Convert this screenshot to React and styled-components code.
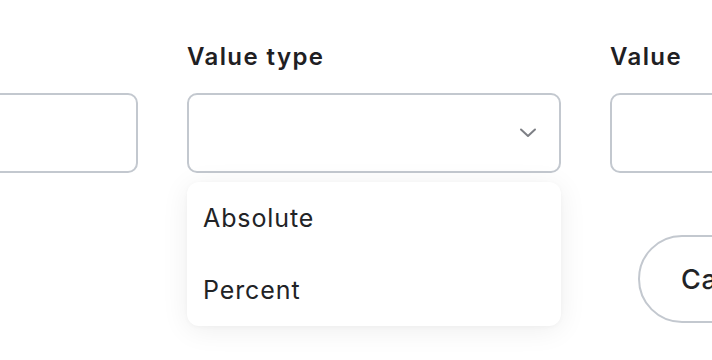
import React from "react";
import styled, { createGlobalStyle } from "styled-components";

const Global = createGlobalStyle`
  html, body { margin: 0; padding: 0; background: #ffffff; }
  body { font-family: Inter, "Noto Sans", sans-serif; color: #222326; overflow: hidden; }
`;

const Page = styled.div`
  width: 712px;
  height: 360px;
  overflow: hidden;
  padding-top: 41px;
  box-sizing: border-box;
`;

const FieldRow = styled.div`
  display: grid;
  grid-template-columns: 374px 374px 374px;
  column-gap: 49px;
  margin-left: -236px;
`;

const Field = styled.div`
  position: relative;
  display: flex;
  flex-direction: column;
`;

const Label = styled.div`
  font-size: 24px;
  line-height: 32px;
  font-weight: 600;
  letter-spacing: 1.4px;
  color: #1f2023;
  height: 32px;
  margin-bottom: 20px;
`;

const InputBox = styled.div`
  height: 80px;
  box-sizing: border-box;
  border: 2px solid #c3c8cf;
  border-radius: 10px;
  background: #fff;
`;

const SelectBox = styled(InputBox)`
  display: flex;
  align-items: center;
  justify-content: flex-end;
  padding-right: 22px;
`;

const Menu = styled.div`
  position: absolute;
  left: 0;
  right: 0;
  top: 141px;
  background: #fff;
  border-radius: 12px;
  box-shadow: 0 4px 28px rgba(0, 0, 0, 0.07), 0 1px 4px rgba(0, 0, 0, 0.03);
  display: flex;
  flex-direction: column;
`;

const Option = styled.div`
  height: 72px;
  display: flex;
  align-items: center;
  padding-left: 16px;
  font-size: 25px;
  letter-spacing: 0.9px;
  color: #222326;
`;

const Footer = styled.div`
  display: flex;
  padding-left: 638px;
  margin-top: 62px;
`;

const Button = styled.div`
  height: 88px;
  box-sizing: border-box;
  border: 2px solid #c3c8cf;
  border-radius: 44px;
  padding: 0 41px;
  display: flex;
  align-items: center;
  font-size: 27px;
  font-weight: 500;
  letter-spacing: 0.6px;
  color: #222326;
  white-space: nowrap;
  flex-shrink: 0;
`;

const Chevron = () => (
  <svg width="18" height="10" viewBox="0 0 18 10" fill="none">
    <path d="M2 1.5 L9 8 L16 1.5" stroke="#7d7f85" strokeWidth="2" strokeLinecap="round" strokeLinejoin="round" />
  </svg>
);

export default function App() {
  return (
    <>
      <Global />
      <Page>
        <FieldRow>
          <Field>
            <Label />
            <InputBox />
          </Field>
          <Field>
            <Label>Value type</Label>
            <SelectBox>
              <Chevron />
            </SelectBox>
            <Menu>
              <Option>Absolute</Option>
              <Option>Percent</Option>
            </Menu>
          </Field>
          <Field>
            <Label>Value</Label>
            <InputBox />
          </Field>
        </FieldRow>
        <Footer>
          <Button>Cancel</Button>
        </Footer>
      </Page>
    </>
  );
}
